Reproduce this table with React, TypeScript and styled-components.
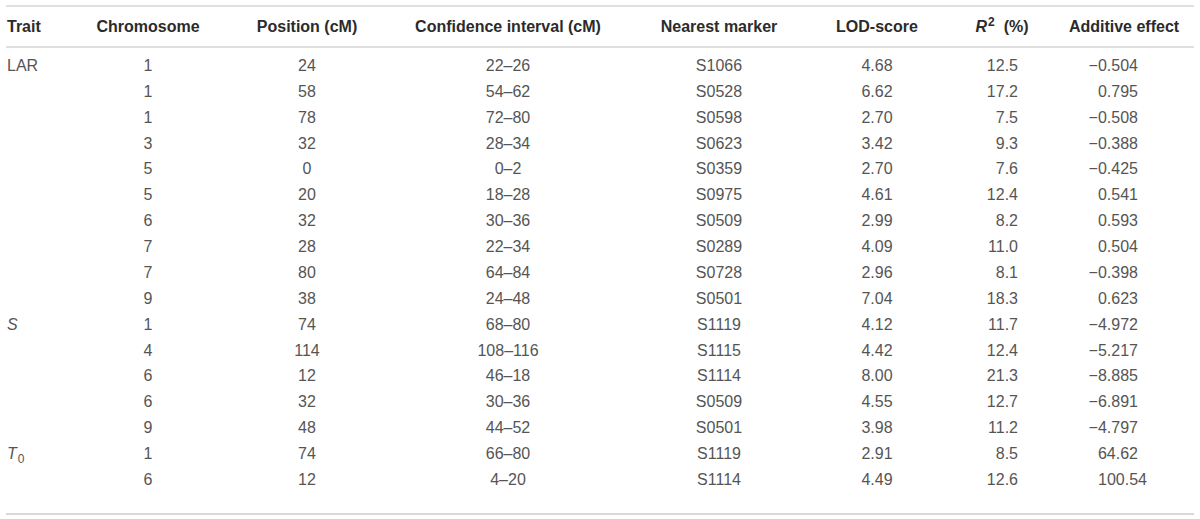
import React from "react";
import styled, { createGlobalStyle } from "styled-components";

const Global = createGlobalStyle`
  html, body { margin: 0; padding: 0; background: #fff; }
  body { font-family: "Liberation Sans", Arial, sans-serif; }
`;

const COLS = "84px 116px 202px 200px 222px 94px 130px 140px";

const Wrapper = styled.div`
  padding: 5px 6px 0 6px;
  width: 1188px;
`;

const Table = styled.div`
  border-top: 2px solid #e0e0e0;
  border-bottom: 2px solid #d8d8d8;
`;

const HeadRow = styled.div`
  display: grid;
  grid-template-columns: ${COLS};
  height: 39px;
  align-items: center;
  border-bottom: 2px solid #e0e0e0;
`;

const Body = styled.div`
  padding: 5px 0 20px 0;
`;

const Row = styled.div`
  display: grid;
  grid-template-columns: ${COLS};
  height: 25.875px;
  align-items: center;
`;

const Th = styled.div<{ $align: string; $pl?: number; $pr?: number }>`
  font-size: 16px;
  font-weight: 700;
  color: #2b2b2b;
  text-align: ${(p) => p.$align};
  padding-left: ${(p) => p.$pl ?? 0}px;
  padding-right: ${(p) => p.$pr ?? 0}px;
  white-space: nowrap;
`;

const Td = styled.div<{ $align: string; $pl?: number; $pr?: number; $over?: number }>`
  font-size: 16px;
  font-weight: 400;
  color: #555555;
  text-align: ${(p) => p.$align};
  padding-left: ${(p) => p.$pl ?? 0}px;
  padding-right: ${(p) => (p.$pr ?? 0) - (p.$over ?? 0)}px;
  white-space: nowrap;
`;

const Ital = styled.i`
  font-style: italic;
`;

const Sup = styled.sup`
  font-size: 12px;
  vertical-align: 6px;
  line-height: 0;
  margin-left: 1px;
`;

const Sub = styled.sub`
  font-size: 12px;
  vertical-align: -4px;
  line-height: 0;
  margin-left: 1px;
`;

type Col = { align: string; pl?: number; pr?: number; bodyAlign?: string; bodyPr?: number };

const cols: Col[] = [
  { align: "left", pl: 1 },
  { align: "center" },
  { align: "center" },
  { align: "center" },
  { align: "center" },
  { align: "center" },
  { align: "center", pl: 26, bodyAlign: "right", bodyPr: 36 },
  { align: "center", bodyAlign: "right", bodyPr: 56 },
];

const rows: string[][] = [
  ["LAR", "1", "24", "22–26", "S1066", "4.68", "12.5", "−0.504"],
  ["", "1", "58", "54–62", "S0528", "6.62", "17.2", "0.795"],
  ["", "1", "78", "72–80", "S0598", "2.70", "7.5", "−0.508"],
  ["", "3", "32", "28–34", "S0623", "3.42", "9.3", "−0.388"],
  ["", "5", "0", "0–2", "S0359", "2.70", "7.6", "−0.425"],
  ["", "5", "20", "18–28", "S0975", "4.61", "12.4", "0.541"],
  ["", "6", "32", "30–36", "S0509", "2.99", "8.2", "0.593"],
  ["", "7", "28", "22–34", "S0289", "4.09", "11.0", "0.504"],
  ["", "7", "80", "64–84", "S0728", "2.96", "8.1", "−0.398"],
  ["", "9", "38", "24–48", "S0501", "7.04", "18.3", "0.623"],
  ["S", "1", "74", "68–80", "S1119", "4.12", "11.7", "−4.972"],
  ["", "4", "114", "108–116", "S1115", "4.42", "12.4", "−5.217"],
  ["", "6", "12", "46–18", "S1114", "8.00", "21.3", "−8.885"],
  ["", "6", "32", "30–36", "S0509", "4.55", "12.7", "−6.891"],
  ["", "9", "48", "44–52", "S0501", "3.98", "11.2", "−4.797"],
  ["T0", "1", "74", "66–80", "S1119", "2.91", "8.5", "64.62"],
  ["", "6", "12", "4–20", "S1114", "4.49", "12.6", "100.54"],
];

function traitLabel(t: string) {
  if (t === "S") return <Ital>S</Ital>;
  if (t === "T0")
    return (
      <>
        <Ital>T</Ital>
        <Sub>0</Sub>
      </>
    );
  return t;
}

const headers: React.ReactNode[] = [
  "Trait",
  "Chromosome",
  "Position (cM)",
  "Confidence interval (cM)",
  "Nearest marker",
  "LOD-score",
  <>
    <Ital>R</Ital>
    <Sup>2</Sup>
    {"\u00a0\u00a0(%)"}
  </>,
  "Additive effect",
];

export default function App() {
  return (
    <>
      <Global />
      <Wrapper>
        <Table>
          <HeadRow>
            {headers.map((h, i) => (
              <Th key={i} $align={cols[i].align} $pl={cols[i].pl} $pr={cols[i].pr}>
                {h}
              </Th>
            ))}
          </HeadRow>
          <Body>
            {rows.map((r, ri) => (
              <Row key={ri}>
                {r.map((c, ci) => {
                  const col = cols[ci];
                  const over = ci === 7 && c === "100.54" ? 9 : 0;
                  return (
                    <Td
                      key={ci}
                      $align={col.bodyAlign ?? col.align}
                      $pl={col.bodyAlign ? 0 : col.pl}
                      $pr={col.bodyPr}
                      $over={over}
                    >
                      {ci === 0 ? traitLabel(c) : c}
                    </Td>
                  );
                })}
              </Row>
            ))}
          </Body>
        </Table>
      </Wrapper>
    </>
  );
}
